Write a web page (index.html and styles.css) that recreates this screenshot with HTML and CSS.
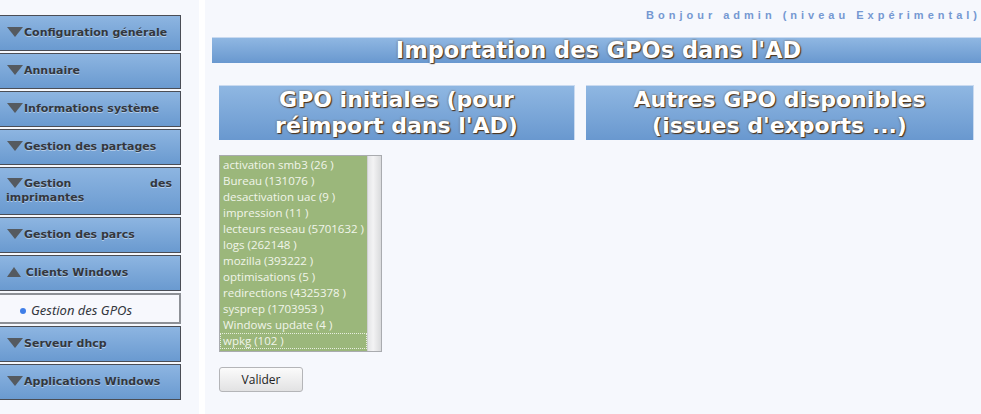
FILE: index.html
```html
<!DOCTYPE html>
<html lang="fr">
<head>
  <meta charset="UTF-8" />
  <title>Importation des GPOs</title>
  <link rel="stylesheet" href="styles.css">
</head>
<body>
  <div class="layout">
    <div class="menu">
      <div class="item"><span class="tri"></span>Configuration générale</div>
      <div class="item"><span class="tri"></span>Annuaire</div>
      <div class="item"><span class="tri"></span>Informations système</div>
      <div class="item"><span class="tri"></span>Gestion des partages</div>
      <div class="item double"><span class="tri"></span>Gestion des imprimantes</div>
      <div class="item"><span class="tri"></span>Gestion des parcs</div>
      <div class="item open"><span class="tri up"></span> Clients Windows</div>
      <div class="sub"><span class="dot"></span>Gestion des GPOs</div>
      <div class="item"><span class="tri"></span>Serveur dhcp</div>
      <div class="item"><span class="tri"></span>Applications Windows</div>
    </div>

    <div class="main">
      <div class="hello">Bonjour admin (niveau Expérimental)</div>
      <h1 class="title">Importation des GPOs dans l'AD</h1>
      <div class="cols">
        <div class="col left">
          <h2 class="subtitle">GPO initiales (pour réimport dans l'AD)</h2>
          <div class="list">
            <div class="opts">
              <div>activation smb3 (26 )</div>
              <div>Bureau (131076 )</div>
              <div>desactivation uac (9 )</div>
              <div>impression (11 )</div>
              <div>lecteurs reseau (5701632 )</div>
              <div>logs (262148 )</div>
              <div>mozilla (393222 )</div>
              <div>optimisations (5 )</div>
              <div>redirections (4325378 )</div>
              <div>sysprep (1703953 )</div>
              <div>Windows update (4 )</div>
              <div class="focus">wpkg (102 )</div>
            </div>
            <div class="scroll"></div>
          </div>
          <button class="btn">Valider</button>
        </div>
        <div class="col right">
          <h2 class="subtitle">Autres GPO disponibles (issues d'exports ...)</h2>
        </div>
      </div>
    </div>
  </div>
</body>
</html>
```

FILE: styles.css
```css
body { margin: 0; background: #fff; font-family: "DejaVu Sans", sans-serif; }
.layout { display: flex; gap: 6px; height: 414px; overflow: hidden; }

.menu { width: 199px; flex: none; background: #f6f8fd; padding-top: 15px; box-sizing: border-box; }
.item {
  width: 181px;
  box-sizing: border-box;
  margin-bottom: 2px;
  padding: 10px 8px 10px 6px;
  border: 1px solid #4a4d55;
  border-left: none;
  background: linear-gradient(#8db5e1, #6a9ad0);
  color: #33373e;
  font-size: 11px;
  font-weight: bold;
  line-height: 14px;
  text-shadow: 0 1px 0 rgba(255,255,255,0.45);
  text-align: justify;
}
.item.double { padding: 9px 8px 9px 6px; }
.tri {
  display: inline-block;
  width: 0; height: 0;
  border-left: 8px solid transparent;
  border-right: 8px solid transparent;
  border-top: 10px solid #555a60;
  margin: 0 1px 0 1px;
  vertical-align: -1px;
}
.tri.up { border-top: none; border-bottom: 10px solid #555a60; border-left-width: 7px; border-right-width: 7px; }
.sub {
  width: 181px;
  box-sizing: border-box;
  height: 31px;
  margin-bottom: 2px;
  padding: 6px 0 0 20px;
  border: 2px solid #8d9096;
  border-left: none;
  background: #f7f8fd;
  font-family: "Noto Sans", sans-serif;
  font-style: italic;
  font-size: 13px;
  color: #33373e;
}
.dot { display: inline-block; width: 6px; height: 6px; border-radius: 50%; background: #3f7ee8; margin-right: 5px; vertical-align: 1px; }

.main { flex: 1; background: #f6f8fd; padding: 9px 0 0 7px; }
.hello {
  text-align: right;
  font-family: "Liberation Sans", sans-serif;
  font-size: 11px;
  font-weight: bold;
  letter-spacing: 4px;
  color: #7598d2;
  height: 28px;
}
.title, .subtitle {
  margin: 0;
  background: linear-gradient(#8fb7e2, #6998cf);
  color: #fff;
  font-weight: bold;
  text-align: center;
  text-shadow: 1px 1px 1px #4a3018, 0 0 2px #6b4a2a;
  border-top: 1px solid #c9daf0;
}
.title { font-size: 22.5px; line-height: 25px; margin-right: -4px; }
.cols { display: flex; gap: 11px; padding: 22px 7px 0 7px; }
.col.left { width: 356px; flex: none; }
.col.right { flex: 1; }
.subtitle {
  font-size: 22px;
  line-height: 26px;
  padding: 1px 24px 1px;
  border: 1px solid #c9daf0;
  border-width: 1px 1px 0 0;
}
.list {
  display: flex;
  width: 163px;
  height: 197px;
  box-sizing: border-box;
  margin-top: 15px;
  border: 1px solid #a9abaf;
  background: #fff;
}
.opts {
  flex: 1;
  background: #9bb77b;
  padding-top: 1px;
  font-family: "Open Sans", sans-serif;
  font-size: 11.5px;
  line-height: 16px;
  color: #f1f5ea;
  white-space: nowrap;
  overflow: hidden;
}
.opts div { padding-left: 3px; }
.opts .focus { outline: 1px dotted #e8eedf; outline-offset: -1px; }
.scroll { width: 13px; background: linear-gradient(90deg, #e4e5e7, #f3f3f4 40%, #d9dadc); border-left: 1px solid #d0d0d2; }
.btn {
  display: block;
  margin-top: 15px;
  width: 84px;
  height: 25px;
  border: 1px solid #b4b5b8;
  border-radius: 3px;
  background: linear-gradient(#fbfbfb, #e2e2e3);
  font-family: "Open Sans", sans-serif;
  font-size: 12px;
  color: #222;
}
```
